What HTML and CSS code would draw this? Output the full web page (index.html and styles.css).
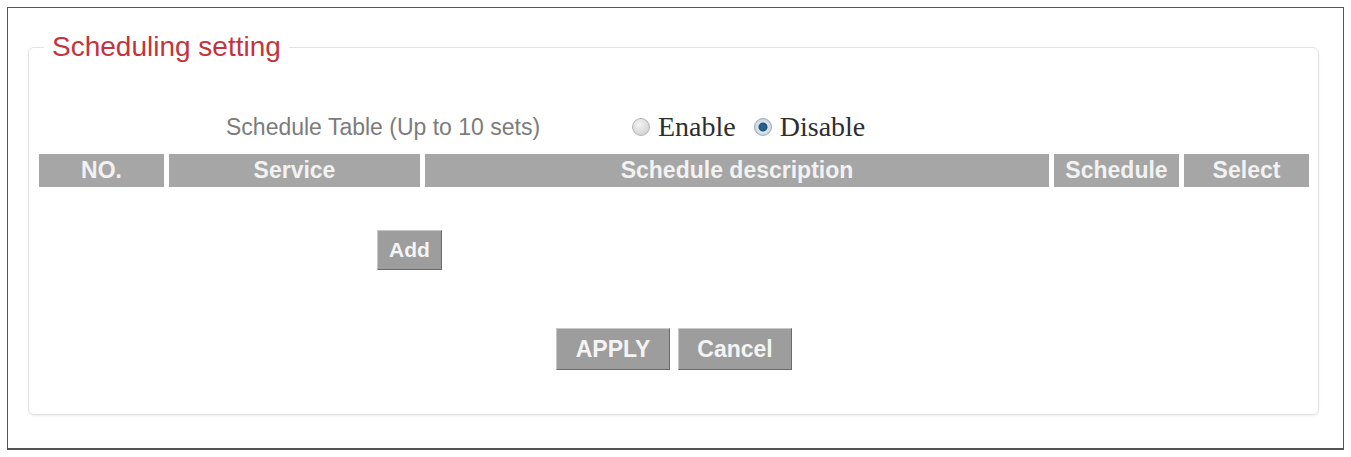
FILE: index.html
```html
<!DOCTYPE html>
<html lang="en">
<head>
  <meta charset="UTF-8" />
  <meta name="viewport" content="width=device-width, initial-scale=1.0"/>
  <title>Scheduling setting</title>
  <link rel="stylesheet" href="styles.css">
</head>
<body>

<div class="frame">
  <fieldset class="panel">
    <legend>Scheduling setting</legend>

    <div class="table-title">
      <span class="title-label">Schedule Table (Up to 10 sets)</span>
      <label class="radio"><input type="radio" name="sched" value="1"/>Enable</label>
      <label class="radio"><input type="radio" name="sched" value="0" checked/>Disable</label>
    </div>

    <div class="table-head">
      <div class="cell">NO.</div>
      <div class="cell">Service</div>
      <div class="cell">Schedule description</div>
      <div class="cell">Schedule</div>
      <div class="cell">Select</div>
    </div>

    <div class="add-row">
      <button class="btn btn-add" type="button">Add</button>
    </div>

    <div class="actions">
      <button class="btn btn-apply" type="button">APPLY</button>
      <button class="btn btn-cancel" type="button">Cancel</button>
    </div>
  </fieldset>
</div>

</body>
</html>
```

FILE: styles.css
```css
body {
  margin: 0;
  font-family: 'Liberation Sans', Arial, sans-serif;
  background-color: white;
}
.frame {
  margin: 7px;
  height: 443px;
  box-sizing: border-box;
  border: 1px solid #555;
  border-bottom: 2px solid #555;
  padding-top: 23px;
}
.panel {
  margin: 0 25px 0 20px;
  padding: 0 9px 44px 10px;
  border: 1px solid #e4e4e4;
  border-radius: 6px;
  box-shadow: 0 1px 2px #ececec;
}
.panel legend {
  margin-left: 5px;
  padding: 0 8px 0 8px;
  font-size: 28px;
  line-height: 32px;
  color: #c4343c;
}
.table-title {
  display: flex;
  align-items: center;
  height: 30px;
  margin-top: 49px;
  padding-left: 187px;
}
.title-label {
  font-size: 23px;
  color: #7c7c7c;
  width: 406px;
}
.radio {
  display: flex;
  align-items: center;
  font-family: 'Liberation Serif', 'Times New Roman', serif;
  font-size: 28px;
  color: #2e2e2e;
  margin-right: 18px;
}
.radio input {
  appearance: none;
  width: 18px;
  height: 18px;
  margin: 0 8px 0 0;
  border-radius: 50%;
  border: 1px solid #b5b5b5;
  background: radial-gradient(circle at 40% 35%, #f4f4f4, #c9c9c9);
}
.radio input:checked {
  border-color: #9cb0bf;
  background: radial-gradient(circle, #2e6a96 0, #1f5580 4px, #dfe6ec 5px, #c5ccd2 9px);
}
.table-head {
  display: grid;
  grid-template-columns: 125px 251px 624px 125px 125px;
  column-gap: 5px;
  margin-top: 12px;
}
.cell {
  height: 33px;
  line-height: 33px;
  background-color: #a6a6a6;
  color: #f2f2f2;
  font-size: 23px;
  font-weight: bold;
  text-align: center;
}
.add-row {
  margin-top: 43px;
  padding-left: 338px;
}
.btn {
  box-sizing: border-box;
  background-color: #9d9d9d;
  color: #f4f4f4;
  font-family: 'Liberation Sans', Arial, sans-serif;
  font-weight: bold;
  border: 1px solid;
  border-color: #c8c8c8 #6a6a6a #6a6a6a #c8c8c8;
  padding: 0;
  cursor: pointer;
}
.btn-add {
  width: 65px;
  height: 40px;
  font-size: 21px;
}
.actions {
  display: flex;
  justify-content: center;
  gap: 8px;
  margin-top: 58px;
}
.btn-apply,
.btn-cancel {
  width: 114px;
  height: 42px;
  font-size: 23px;
}
```
